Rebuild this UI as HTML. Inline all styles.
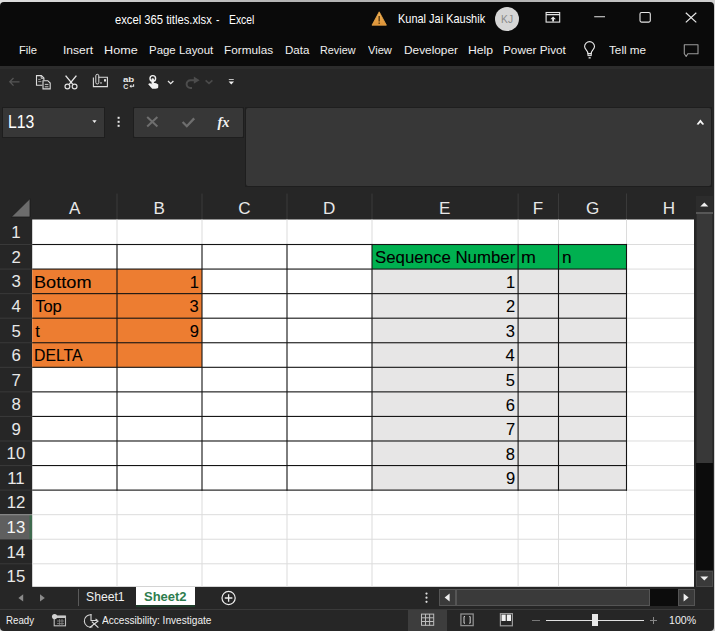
<!DOCTYPE html>
<html><head><meta charset="utf-8"><style>
html,body{margin:0;padding:0;width:715px;height:631px;overflow:hidden;background:linear-gradient(90deg,#dedede 0%,#b4b4b4 40%,#b0b0b0 70%,#d0d0d0 100%);}
#win{position:absolute;left:0;top:1.6px;width:713.5px;height:629.4px;overflow:hidden;border-radius:4px;}
#in{position:absolute;left:0;top:-1.6px;width:715px;height:631px;}
.t{position:absolute;white-space:pre;line-height:1;font-family:"Liberation Sans",sans-serif;transform-origin:0 0;}
</style></head><body>
<div id="win"><div id="in">
<div style="position:absolute;left:0px;top:0px;width:713.5px;height:65.5px;background:#0a0a0a;"></div>
<div style="position:absolute;left:0px;top:65.5px;width:713.5px;height:565.5px;background:#262626;"></div>
<div style="position:absolute;left:0px;top:66px;width:713.5px;height:2.5px;background:#2c2c2c;"></div>
<div style="position:absolute;left:2px;top:107px;width:103px;height:30.5px;background:#1e1e1e;"></div>
<div style="position:absolute;left:133px;top:107px;width:111px;height:30.5px;background:#1e1e1e;"></div>
<div style="position:absolute;left:244.5px;top:107px;width:467px;height:79.5px;background:#1e1e1e;"></div>
<div style="position:absolute;left:3px;top:108px;width:101px;height:28.5px;background:#373737;"></div>
<div style="position:absolute;left:134px;top:108px;width:109px;height:28.5px;background:#373737;border-radius:1px"></div>
<div style="position:absolute;left:245.5px;top:108px;width:465px;height:77.7px;background:#373737;border-radius:2px"></div>
<svg style="position:absolute;left:0;top:0" width="715" height="631"><rect x="116.500" y="193.500" width="1.000" height="26.000" fill="#3a3a3a" /><rect x="201.500" y="193.500" width="1.000" height="26.000" fill="#3a3a3a" /><rect x="286.500" y="193.500" width="1.000" height="26.000" fill="#3a3a3a" /><rect x="371.500" y="193.500" width="1.000" height="26.000" fill="#3a3a3a" /><rect x="517.600" y="193.500" width="1.000" height="26.000" fill="#3a3a3a" /><rect x="558.000" y="193.500" width="1.000" height="26.000" fill="#3a3a3a" /><rect x="626.000" y="193.500" width="1.000" height="26.000" fill="#3a3a3a" /><rect x="0.000" y="244.010" width="32.200" height="1.000" fill="#3a3a3a" /><rect x="0.000" y="268.570" width="32.200" height="1.000" fill="#3a3a3a" /><rect x="0.000" y="293.130" width="32.200" height="1.000" fill="#3a3a3a" /><rect x="0.000" y="317.690" width="32.200" height="1.000" fill="#3a3a3a" /><rect x="0.000" y="342.250" width="32.200" height="1.000" fill="#3a3a3a" /><rect x="0.000" y="366.810" width="32.200" height="1.000" fill="#3a3a3a" /><rect x="0.000" y="391.370" width="32.200" height="1.000" fill="#3a3a3a" /><rect x="0.000" y="415.930" width="32.200" height="1.000" fill="#3a3a3a" /><rect x="0.000" y="440.490" width="32.200" height="1.000" fill="#3a3a3a" /><rect x="0.000" y="465.050" width="32.200" height="1.000" fill="#3a3a3a" /><rect x="0.000" y="489.610" width="32.200" height="1.000" fill="#3a3a3a" /><rect x="0.000" y="514.170" width="32.200" height="1.000" fill="#3a3a3a" /><rect x="0.000" y="538.730" width="32.200" height="1.000" fill="#3a3a3a" /><rect x="0.000" y="563.290" width="32.200" height="1.000" fill="#3a3a3a" /><rect x="0.000" y="514.670" width="32.200" height="24.560" fill="#5f5f5f" /><rect x="29.400" y="514.670" width="2.800" height="24.560" fill="#3f6a4e" /><rect x="0.000" y="514.070" width="32.200" height="1.200" fill="#8a8a8a" /><rect x="32.200" y="219.500" width="662.000" height="367.300" fill="#ffffff" /><rect x="32.200" y="269.070" width="169.800" height="98.240" fill="#ED7D31" /><rect x="372.000" y="244.510" width="254.500" height="24.560" fill="#00B050" /><rect x="372.000" y="269.070" width="254.500" height="221.040" fill="#E7E6E6" /><rect x="116.500" y="219.500" width="1.000" height="25.010" fill="#dcdcdc" /><rect x="116.500" y="490.110" width="1.000" height="96.690" fill="#dcdcdc" /><rect x="201.500" y="219.500" width="1.000" height="25.010" fill="#dcdcdc" /><rect x="201.500" y="490.110" width="1.000" height="96.690" fill="#dcdcdc" /><rect x="286.500" y="219.500" width="1.000" height="25.010" fill="#dcdcdc" /><rect x="286.500" y="490.110" width="1.000" height="96.690" fill="#dcdcdc" /><rect x="371.500" y="219.500" width="1.000" height="25.010" fill="#dcdcdc" /><rect x="371.500" y="490.110" width="1.000" height="96.690" fill="#dcdcdc" /><rect x="517.600" y="219.500" width="1.000" height="25.010" fill="#dcdcdc" /><rect x="517.600" y="490.110" width="1.000" height="96.690" fill="#dcdcdc" /><rect x="558.000" y="219.500" width="1.000" height="25.010" fill="#dcdcdc" /><rect x="558.000" y="490.110" width="1.000" height="96.690" fill="#dcdcdc" /><rect x="626.000" y="219.500" width="1.000" height="25.010" fill="#dcdcdc" /><rect x="626.000" y="490.110" width="1.000" height="96.690" fill="#dcdcdc" /><rect x="626.500" y="244.010" width="68.500" height="1.000" fill="#dcdcdc" /><rect x="626.500" y="268.570" width="68.500" height="1.000" fill="#dcdcdc" /><rect x="626.500" y="293.130" width="68.500" height="1.000" fill="#dcdcdc" /><rect x="626.500" y="317.690" width="68.500" height="1.000" fill="#dcdcdc" /><rect x="626.500" y="342.250" width="68.500" height="1.000" fill="#dcdcdc" /><rect x="626.500" y="366.810" width="68.500" height="1.000" fill="#dcdcdc" /><rect x="626.500" y="391.370" width="68.500" height="1.000" fill="#dcdcdc" /><rect x="626.500" y="415.930" width="68.500" height="1.000" fill="#dcdcdc" /><rect x="626.500" y="440.490" width="68.500" height="1.000" fill="#dcdcdc" /><rect x="626.500" y="465.050" width="68.500" height="1.000" fill="#dcdcdc" /><rect x="626.500" y="489.610" width="68.500" height="1.000" fill="#dcdcdc" /><rect x="32.200" y="514.170" width="662.800" height="1.000" fill="#dcdcdc" /><rect x="32.200" y="538.730" width="662.800" height="1.000" fill="#dcdcdc" /><rect x="32.200" y="563.290" width="662.800" height="1.000" fill="#dcdcdc" /><rect x="32.200" y="243.960" width="594.800" height="1.100" fill="#141414" /><rect x="32.200" y="268.520" width="594.800" height="1.100" fill="#141414" /><rect x="32.200" y="293.080" width="594.800" height="1.100" fill="#141414" /><rect x="32.200" y="317.640" width="594.800" height="1.100" fill="#141414" /><rect x="32.200" y="342.200" width="594.800" height="1.100" fill="#141414" /><rect x="32.200" y="366.760" width="594.800" height="1.100" fill="#141414" /><rect x="32.200" y="391.320" width="594.800" height="1.100" fill="#141414" /><rect x="32.200" y="415.880" width="594.800" height="1.100" fill="#141414" /><rect x="32.200" y="440.440" width="594.800" height="1.100" fill="#141414" /><rect x="32.200" y="465.000" width="594.800" height="1.100" fill="#141414" /><rect x="32.200" y="489.560" width="594.800" height="1.100" fill="#141414" /><rect x="116.450" y="243.960" width="1.100" height="246.700" fill="#141414" /><rect x="201.450" y="243.960" width="1.100" height="246.700" fill="#141414" /><rect x="286.450" y="243.960" width="1.100" height="246.700" fill="#141414" /><rect x="371.450" y="243.960" width="1.100" height="246.700" fill="#141414" /><rect x="517.550" y="243.960" width="1.100" height="246.700" fill="#141414" /><rect x="557.950" y="243.960" width="1.100" height="246.700" fill="#141414" /><rect x="625.950" y="243.960" width="1.100" height="246.700" fill="#141414" /></svg>
<div style="position:absolute;left:694.2px;top:196px;width:19px;height:391px;background:#262626;"></div>
<div style="position:absolute;left:695.5px;top:196px;width:17px;height:15.5px;background:#2c2c2c;"></div>
<div style="position:absolute;left:695.5px;top:212px;width:17px;height:1.6px;background:#575757;"></div>
<div style="position:absolute;left:695.5px;top:213.6px;width:17px;height:249.4px;background:#383838;border-left:1px solid #2c2c2c;border-right:1px solid #2c2c2c;box-sizing:border-box"></div>
<div style="position:absolute;left:695.5px;top:463px;width:17px;height:107px;background:#0c0c0c;"></div>
<div style="position:absolute;left:695.5px;top:570.5px;width:17px;height:16.5px;background:#3a3a3a;border:1px solid #4a4a4a;box-sizing:border-box"></div>
<div style="position:absolute;left:66px;top:65.5px;width:0px;height:0px;background:#000;"></div>
<div style="position:absolute;left:0px;top:586.8px;width:713.5px;height:22.2px;background:#262626;"></div>
<div style="position:absolute;left:0px;top:608.7px;width:713.5px;height:1px;background:#3a3a3a;"></div>
<div style="position:absolute;left:77.5px;top:589px;width:1px;height:16.5px;background:#5a5a5a;"></div>
<div style="position:absolute;left:136px;top:586.8px;width:58.5px;height:19px;background:#ffffff;"></div>
<div style="position:absolute;left:136px;top:605px;width:59px;height:2px;background:#1d3d2a;"></div>
<div style="position:absolute;left:438.7px;top:589.2px;width:255.8px;height:16.6px;background:#262626;"></div>
<div style="position:absolute;left:438.7px;top:589.2px;width:17.2px;height:16.6px;background:#3a3a3a;border:1px solid #555;box-sizing:border-box"></div>
<div style="position:absolute;left:455.9px;top:589.2px;width:194.5px;height:16.6px;background:#3a3a3a;border:1px solid #555;box-sizing:border-box"></div>
<div style="position:absolute;left:650.4px;top:589.2px;width:27.200000000000045px;height:16.6px;background:#0c0c0c;"></div>
<div style="position:absolute;left:677.6px;top:589.2px;width:17px;height:16.6px;background:#3a3a3a;border:1px solid #555;box-sizing:border-box"></div>
<div style="position:absolute;left:408px;top:609.7px;width:39.3px;height:21.3px;background:#3d3d3d;"></div>
<div style="position:absolute;left:546px;top:619.8px;width:98px;height:1.3px;background:#e0e0e0;"></div>
<div style="position:absolute;left:532px;top:619.9px;width:7.6px;height:1.2px;background:#777;"></div>
<div style="position:absolute;left:649.5px;top:619.9px;width:7px;height:1.2px;background:#888;"></div>
<div style="position:absolute;left:652.5px;top:616.9px;width:1.2px;height:7px;background:#888;"></div>
<div style="position:absolute;left:592.3px;top:614px;width:5.4px;height:11.8px;background:#e8e8e8;"></div>
<div style="position:absolute;left:494.8px;top:6.6px;width:24.6px;height:24.6px;border-radius:50%;background:#d6d6d6"></div>
<div class="t" style="left:114.55px;top:14.09px;font-size:12.66px;color:#ffffff;font-weight:400;transform:scaleX(0.8881);">excel 365 titles.xlsx</div>
<div class="t" style="left:215.98px;top:14.09px;font-size:12.66px;color:#ffffff;font-weight:400;transform:scaleX(0.8215);">-</div>
<div class="t" style="left:229.07px;top:14.09px;font-size:12.66px;color:#ffffff;font-weight:400;transform:scaleX(0.8197);">Excel</div>
<div class="t" style="left:398.12px;top:13.47px;font-size:12.80px;color:#ffffff;font-weight:400;transform:scaleX(0.8565);">Kunal Jai Kaushik</div>
<div class="t" style="left:18.60px;top:44.87px;font-size:11.38px;color:#f0f0f0;font-weight:400;transform:scaleX(0.9874);">File</div>
<div class="t" style="left:63.41px;top:44.87px;font-size:11.38px;color:#f0f0f0;font-weight:400;transform:scaleX(1.0597);">Insert</div>
<div class="t" style="left:104.49px;top:44.87px;font-size:11.38px;color:#f0f0f0;font-weight:400;transform:scaleX(1.1125);">Home</div>
<div class="t" style="left:149.48px;top:44.87px;font-size:11.38px;color:#f0f0f0;font-weight:400;transform:scaleX(1.0060);">Page Layout</div>
<div class="t" style="left:224.46px;top:44.87px;font-size:11.38px;color:#f0f0f0;font-weight:400;transform:scaleX(1.0352);">Formulas</div>
<div class="t" style="left:284.58px;top:44.87px;font-size:11.38px;color:#f0f0f0;font-weight:400;transform:scaleX(1.0142);">Data</div>
<div class="t" style="left:319.93px;top:44.87px;font-size:11.38px;color:#f0f0f0;font-weight:400;transform:scaleX(0.9509);">Review</div>
<div class="t" style="left:368.00px;top:44.87px;font-size:11.38px;color:#f0f0f0;font-weight:400;transform:scaleX(0.9776);">View</div>
<div class="t" style="left:403.65px;top:44.87px;font-size:11.38px;color:#f0f0f0;font-weight:400;transform:scaleX(1.0411);">Developer</div>
<div class="t" style="left:467.82px;top:44.87px;font-size:11.38px;color:#f0f0f0;font-weight:400;transform:scaleX(1.0733);">Help</div>
<div class="t" style="left:503.06px;top:44.87px;font-size:11.38px;color:#f0f0f0;font-weight:400;transform:scaleX(1.0363);">Power Pivot</div>
<div class="t" style="left:609.27px;top:44.87px;font-size:11.38px;color:#f0f0f0;font-weight:400;transform:scaleX(1.0309);">Tell me</div>
<div class="t" style="left:7.74px;top:113.84px;font-size:17.92px;color:#ffffff;font-weight:400;transform:scaleX(0.8806);">L13</div>
<div class="t" style="left:68.88px;top:199.56px;font-size:17.07px;color:#e8e8e8;font-weight:400;transform:scaleX(1.0000);">A</div>
<div class="t" style="left:153.53px;top:199.56px;font-size:17.07px;color:#e8e8e8;font-weight:400;transform:scaleX(1.0000);">B</div>
<div class="t" style="left:238.18px;top:199.56px;font-size:17.07px;color:#e8e8e8;font-weight:400;transform:scaleX(1.0000);">C</div>
<div class="t" style="left:323.01px;top:199.56px;font-size:17.07px;color:#e8e8e8;font-weight:400;transform:scaleX(1.0000);">D</div>
<div class="t" style="left:438.99px;top:199.56px;font-size:17.07px;color:#e8e8e8;font-weight:400;transform:scaleX(1.0000);">E</div>
<div class="t" style="left:532.67px;top:199.56px;font-size:17.07px;color:#e8e8e8;font-weight:400;transform:scaleX(1.0000);">F</div>
<div class="t" style="left:586.01px;top:199.56px;font-size:17.07px;color:#e8e8e8;font-weight:400;transform:scaleX(1.0000);">G</div>
<div class="t" style="left:662.77px;top:199.56px;font-size:17.07px;color:#e8e8e8;font-weight:400;transform:scaleX(1.0000);">H</div>
<div class="t" style="left:11.33px;top:225.30px;font-size:16.79px;color:#e8e8e8;font-weight:400;transform:scaleX(1.0000);">1</div>
<div class="t" style="left:11.50px;top:249.86px;font-size:16.79px;color:#e8e8e8;font-weight:400;transform:scaleX(1.0000);">2</div>
<div class="t" style="left:11.58px;top:274.42px;font-size:16.79px;color:#e8e8e8;font-weight:400;transform:scaleX(1.0000);">3</div>
<div class="t" style="left:11.58px;top:298.98px;font-size:16.79px;color:#e8e8e8;font-weight:400;transform:scaleX(1.0000);">4</div>
<div class="t" style="left:11.50px;top:323.54px;font-size:16.79px;color:#e8e8e8;font-weight:400;transform:scaleX(1.0000);">5</div>
<div class="t" style="left:11.42px;top:348.10px;font-size:16.79px;color:#e8e8e8;font-weight:400;transform:scaleX(1.0000);">6</div>
<div class="t" style="left:11.50px;top:372.66px;font-size:16.79px;color:#e8e8e8;font-weight:400;transform:scaleX(1.0000);">7</div>
<div class="t" style="left:11.50px;top:397.22px;font-size:16.79px;color:#e8e8e8;font-weight:400;transform:scaleX(1.0000);">8</div>
<div class="t" style="left:11.58px;top:421.78px;font-size:16.79px;color:#e8e8e8;font-weight:400;transform:scaleX(1.0000);">9</div>
<div class="t" style="left:6.58px;top:446.34px;font-size:16.79px;color:#e8e8e8;font-weight:400;transform:scaleX(1.0000);">10</div>
<div class="t" style="left:7.29px;top:470.90px;font-size:16.79px;color:#e8e8e8;font-weight:400;transform:scaleX(1.0000);">11</div>
<div class="t" style="left:6.66px;top:495.46px;font-size:16.79px;color:#e8e8e8;font-weight:400;transform:scaleX(1.0000);">12</div>
<div class="t" style="left:6.58px;top:520.02px;font-size:16.79px;color:#f4f4f4;font-weight:400;transform:scaleX(1.0000);">13</div>
<div class="t" style="left:6.50px;top:544.58px;font-size:16.79px;color:#e8e8e8;font-weight:400;transform:scaleX(1.0000);">14</div>
<div class="t" style="left:6.58px;top:569.14px;font-size:16.79px;color:#e8e8e8;font-weight:400;transform:scaleX(1.0000);">15</div>
<div class="t" style="left:34.05px;top:273.76px;font-size:16.50px;color:#000000;-webkit-text-stroke:0.08px #000;font-weight:400;transform:scaleX(1.0999);">Bottom</div>
<div class="t" style="left:35.17px;top:298.32px;font-size:16.50px;color:#000000;-webkit-text-stroke:0.08px #000;font-weight:400;transform:scaleX(1.0000);">Top</div>
<div class="t" style="left:35.33px;top:322.88px;font-size:16.50px;color:#000000;-webkit-text-stroke:0.08px #000;font-weight:400;transform:scaleX(1.0000);">t</div>
<div class="t" style="left:34.24px;top:347.44px;font-size:16.50px;color:#000000;-webkit-text-stroke:0.08px #000;font-weight:400;transform:scaleX(0.9583);">DELTA</div>
<div class="t" style="left:189.78px;top:273.76px;font-size:16.50px;color:#000000;-webkit-text-stroke:0.08px #000;font-weight:400;transform:scaleX(1.0000);">1</div>
<div class="t" style="left:189.62px;top:298.32px;font-size:16.50px;color:#000000;-webkit-text-stroke:0.08px #000;font-weight:400;transform:scaleX(1.0000);">3</div>
<div class="t" style="left:189.78px;top:322.88px;font-size:16.50px;color:#000000;-webkit-text-stroke:0.08px #000;font-weight:400;transform:scaleX(1.0000);">9</div>
<div class="t" style="left:374.93px;top:249.20px;font-size:16.50px;color:#000000;-webkit-text-stroke:0.08px #000;font-weight:400;transform:scaleX(1.0196);">Sequence Number</div>
<div class="t" style="left:521.13px;top:249.20px;font-size:16.50px;color:#000000;-webkit-text-stroke:0.08px #000;font-weight:400;transform:scaleX(1.0840);">m</div>
<div class="t" style="left:561.76px;top:249.20px;font-size:16.50px;color:#000000;-webkit-text-stroke:0.08px #000;font-weight:400;transform:scaleX(1.0468);">n</div>
<div class="t" style="left:505.88px;top:273.76px;font-size:16.50px;color:#000000;-webkit-text-stroke:0.08px #000;font-weight:400;transform:scaleX(1.0000);">1</div>
<div class="t" style="left:505.88px;top:298.32px;font-size:16.50px;color:#000000;-webkit-text-stroke:0.08px #000;font-weight:400;transform:scaleX(1.0000);">2</div>
<div class="t" style="left:505.72px;top:322.88px;font-size:16.50px;color:#000000;-webkit-text-stroke:0.08px #000;font-weight:400;transform:scaleX(1.0000);">3</div>
<div class="t" style="left:505.55px;top:347.44px;font-size:16.50px;color:#000000;-webkit-text-stroke:0.08px #000;font-weight:400;transform:scaleX(1.0000);">4</div>
<div class="t" style="left:505.72px;top:372.00px;font-size:16.50px;color:#000000;-webkit-text-stroke:0.08px #000;font-weight:400;transform:scaleX(1.0000);">5</div>
<div class="t" style="left:505.72px;top:396.56px;font-size:16.50px;color:#000000;-webkit-text-stroke:0.08px #000;font-weight:400;transform:scaleX(1.0000);">6</div>
<div class="t" style="left:505.88px;top:421.12px;font-size:16.50px;color:#000000;-webkit-text-stroke:0.08px #000;font-weight:400;transform:scaleX(1.0000);">7</div>
<div class="t" style="left:505.72px;top:445.68px;font-size:16.50px;color:#000000;-webkit-text-stroke:0.08px #000;font-weight:400;transform:scaleX(1.0000);">8</div>
<div class="t" style="left:505.88px;top:470.24px;font-size:16.50px;color:#000000;-webkit-text-stroke:0.08px #000;font-weight:400;transform:scaleX(1.0000);">9</div>
<div class="t" style="left:86.41px;top:590.07px;font-size:13.51px;color:#f0f0f0;font-weight:400;transform:scaleX(0.9024);">Sheet1</div>
<div class="t" style="left:144.24px;top:589.89px;font-size:13.37px;color:#2e7d4e;font-weight:700;transform:scaleX(0.9722);">Sheet2</div>
<div class="t" style="left:6.12px;top:615.72px;font-size:10.38px;color:#f0f0f0;font-weight:400;transform:scaleX(0.9354);">Ready</div>
<div class="t" style="left:101.80px;top:615.72px;font-size:10.38px;color:#f0f0f0;font-weight:400;transform:scaleX(0.9736);">Accessibility: Investigate</div>
<div class="t" style="left:668.66px;top:615.29px;font-size:10.53px;color:#f0f0f0;font-weight:400;transform:scaleX(1.0047);">100%</div>
<div class="t" style="left:501.07px;top:14.54px;font-size:10.24px;color:#8a8a8a;font-weight:400;transform:scaleX(1.0000);">KJ</div>
<svg style="position:absolute;left:0;top:0" width="715" height="631" viewBox="0 0 715 631">
<!-- warning -->
<defs><linearGradient id="wg" x1="0" y1="0" x2="0" y2="1"><stop offset="0" stop-color="#F2B45A"/><stop offset="1" stop-color="#DC9236"/></linearGradient></defs><path d="M379.2 11.8 L386.4 25.2 L372 25.2 Z" fill="url(#wg)" stroke="#E8A445" stroke-width="0.8" stroke-linejoin="round"/>
<rect x="378.5" y="16" width="1.4" height="5.5" fill="#5a3a10"/>
<rect x="378.5" y="22.5" width="1.4" height="1.4" fill="#5a3a10"/>
<!-- ribbon display options -->
<rect x="546.1" y="12.5" width="13.6" height="9.6" fill="none" stroke="#e6e6e6" stroke-width="1.1"/>
<line x1="546" y1="14.6" x2="560" y2="14.6" stroke="#e6e6e6" stroke-width="1.1"/>
<path d="M553.1 16.4 L555.9 19.2 L554 19.2 L554 21.6 L552.2 21.6 L552.2 19.2 L550.3 19.2 Z" fill="#e6e6e6"/>
<!-- minimize -->
<line x1="594.2" y1="16.8" x2="605" y2="16.8" stroke="#e6e6e6" stroke-width="1.1"/>
<!-- maximize -->
<rect x="640" y="12.5" width="10.3" height="9.6" rx="1.5" fill="none" stroke="#e6e6e6" stroke-width="1.1"/>
<!-- close -->
<path d="M685.8 12.8 L696.3 22.4 M696.3 12.8 L685.8 22.4" stroke="#e6e6e6" stroke-width="1.2"/>
<!-- bulb -->
<path d="M587.9 53.6 C587.9 50.5 584.6 49.5 584.6 46.6 A4.95 4.95 0 0 1 594.5 46.6 C594.5 49.5 591.2 50.5 591.2 53.6 Z" fill="none" stroke="#e8e8e8" stroke-width="1.1"/>
<rect x="588" y="53.6" width="3.2" height="2" fill="none" stroke="#e8e8e8" stroke-width="1"/>
<rect x="588.6" y="57.2" width="2.1" height="1.3" fill="#e8e8e8"/>
<!-- comment -->
<path d="M684.3 44.8 L698 44.8 L698 53.8 L687.8 53.8 L686.2 56.5 L684.3 53.8 Z" fill="none" stroke="#9a9a9a" stroke-width="1.1" stroke-linejoin="round"/>
<!-- back arrow dim -->
<path d="M10 81.8 L19.5 81.8 M13.5 78 L9.8 81.8 L13.5 85.6" fill="none" stroke="#555" stroke-width="1.3"/>
<!-- copy -->
<path d="M42.4 85.2 L36.5 85.2 L36.5 75.6 L41.4 75.6 L43.9 78.1 L43.9 80.2" fill="none" stroke="#dcdcdc" stroke-width="1.1"/>
<path d="M41.2 75.8 L41.2 78.3 L43.7 78.3" fill="none" stroke="#dcdcdc" stroke-width="0.9"/>
<path d="M38.2 79.4 L40.6 79.4 M38.2 81.6 L41.4 81.6" stroke="#bdbdbd" stroke-width="0.8"/>
<path d="M43 80.7 L47.8 80.7 L50.2 83.1 L50.2 88.9 L43 88.9 Z" fill="#262626" stroke="#dcdcdc" stroke-width="1.1"/>
<path d="M44.8 84.4 L48.4 84.4 M44.8 86.8 L48.4 86.8" stroke="#d8d8d8" stroke-width="0.9"/>
<!-- scissors -->
<path d="M65.6 75.6 L72.8 84.4 M76.4 75.6 L69.2 84.4" stroke="#e6e6e6" stroke-width="1.4"/>
<circle cx="67.4" cy="86.5" r="2.4" fill="none" stroke="#e0e0e0" stroke-width="1.2"/>
<circle cx="74.6" cy="86.5" r="2.4" fill="none" stroke="#e0e0e0" stroke-width="1.2"/>
<!-- paste/clip box -->
<path d="M93.4 77.5 L93.4 86.6 L107.4 86.6 L107.4 77.2 L98.5 77.2" fill="none" stroke="#dcdcdc" stroke-width="1.1"/>
<path d="M95.8 82.5 L95.8 75.8 A1.5 1.5 0 0 1 98.8 75.8 L98.8 82.5 A1.5 1.5 0 0 1 95.8 82.5" fill="none" stroke="#dcdcdc" stroke-width="1"/>
<rect x="104" y="79.2" width="2" height="2.3" fill="#e6e6e6"/>
<rect x="100.2" y="82.3" width="1.6" height="1.3" fill="#cfcfcf"/>
<!-- ab c -->
<text x="122.9" y="81.9" font-family="Liberation Sans" font-weight="700" font-size="7.3" fill="#e8e8e8" textLength="11.3" lengthAdjust="spacingAndGlyphs">ab</text>
<text x="123.2" y="88.9" font-family="Liberation Sans" font-weight="700" font-size="7.4" fill="#e8e8e8" textLength="5" lengthAdjust="spacingAndGlyphs">C</text>
<path d="M133.6 84.2 L133.6 86.3 L130.6 86.3" fill="none" stroke="#e4e4e4" stroke-width="1.1"/>
<path d="M129.4 86.3 L131.4 84.6 L131.4 88 Z" fill="#e4e4e4"/>
<!-- touch hand -->
<circle cx="152.8" cy="78.4" r="2.8" fill="none" stroke="#f2f2f2" stroke-width="1.4"/>
<rect x="151.5" y="78.2" width="2.4" height="6.5" rx="1" fill="#f2f2f2"/>
<path d="M148.2 84.2 C149 83.2 150.4 83 151.5 84 L152.5 84.6 L153.2 82.8 L156.2 83.2 L158.3 84.6 L158.2 87.6 C157.6 88.8 156 88.8 154 88.8 L152.2 88.8 Z" fill="#f2f2f2"/>
<!-- chevron -->
<path d="M168 81 L170.7 83.6 L173.4 81" fill="none" stroke="#e6e6e6" stroke-width="1.3"/>
<!-- redo dim -->
<path d="M196.5 80.2 L190.5 80.2 A3.9 3.9 0 0 0 190.5 88 L192 88" fill="none" stroke="#4c4c4c" stroke-width="2"/>
<path d="M193.8 76.6 L199.6 80.2 L193.8 83.8 Z" fill="#4c4c4c"/>
<path d="M205.6 80.4 L209 83.4 L212.4 80.4" fill="none" stroke="#4a4a4a" stroke-width="1.7"/>
<!-- customize -->
<line x1="228.8" y1="79.5" x2="233.8" y2="79.5" stroke="#d0d0d0" stroke-width="0.9"/>
<path d="M228.6 81.4 L234 81.4 L231.3 84.6 Z" fill="#f0f0f0"/>
<!-- name box dropdown -->
<path d="M92.3 120.3 L96.6 120.3 L94.45 122.9 Z" fill="#f0f0f0"/>
<!-- vertical dots -->
<rect x="117.6" y="116.8" width="2" height="2" fill="#e8e8e8"/>
<rect x="117.6" y="120.8" width="2" height="2" fill="#e8e8e8"/>
<rect x="117.6" y="124.8" width="2" height="2" fill="#e8e8e8"/>
<!-- formula X -->
<path d="M147.2 117 L157.4 126.6 M157.4 117 L147.2 126.6" stroke="#6e6e6e" stroke-width="2"/>
<!-- check -->
<path d="M182.6 122 L186.8 126.2 L194.2 118.4" fill="none" stroke="#6e6e6e" stroke-width="2.3"/>
<!-- fx -->
<text x="217.5" y="127.3" font-family="Liberation Serif" font-style="italic" font-weight="700" font-size="14.5" fill="#f2f2f2" textLength="12" lengthAdjust="spacingAndGlyphs">fx</text>
<!-- collapse chevron -->
<path d="M696.6 124.2 L700.4 119.4 L704.2 124.2 L702.4 124.8 L700.4 122.4 L698.4 124.8 Z" fill="#f6f6f6"/>
<!-- select all triangle -->
<path d="M30 198.6 L30 217 L11.3 217 Z" fill="#6c6c6c" stroke="#1a1a1a" stroke-width="0.8"/>
<!-- vscroll arrows -->
<path d="M700.3 206.5 L704.3 202.5 L708.3 206.5 Z" fill="#f0f0f0"/>
<path d="M700.3 576.6 L708.3 576.6 L704.3 580.6 Z" fill="#f0f0f0"/>
<!-- tab nav arrows -->
<path d="M23.2 594.2 L23.2 601.6 L18.4 597.9 Z" fill="#8a8a8a"/>
<path d="M40 594.2 L40 601.6 L44.8 597.9 Z" fill="#8a8a8a"/>
<!-- plus circle -->
<circle cx="228.6" cy="598" r="6.6" fill="none" stroke="#ececec" stroke-width="1.2"/>
<path d="M224.8 598 L232.4 598 M228.6 594.2 L228.6 601.8" stroke="#ececec" stroke-width="1.3"/>
<!-- tab dots -->
<circle cx="426.5" cy="593.6" r="1.1" fill="#e0e0e0"/>
<circle cx="426.5" cy="597.7" r="1.1" fill="#e0e0e0"/>
<circle cx="426.5" cy="601.8" r="1.1" fill="#e0e0e0"/>
<!-- hscroll arrows -->
<path d="M449.6 593.6 L449.6 601.6 L444.6 597.6 Z" fill="#f0f0f0"/>
<path d="M683.6 593.6 L683.6 601.6 L688.6 597.6 Z" fill="#f0f0f0"/>
<!-- macro icon -->
<rect x="54.2" y="616.2" width="11.3" height="9.6" fill="none" stroke="#bdbdbd" stroke-width="1.1"/>
<rect x="56" y="615.6" width="9.6" height="2.4" fill="#c8c8c8"/>
<path d="M57 621 L64 621 M57 623.6 L64 623.6 M59.6 619 L59.6 625.5 M62 619 L62 625.5" stroke="#8a8a8a" stroke-width="0.8"/>
<circle cx="54.6" cy="616.6" r="2.6" fill="#d0d0d0"/>
<!-- accessibility -->
<path d="M91.5 614.8 A6.2 6.2 0 1 0 92.5 626.8" fill="none" stroke="#d8d8d8" stroke-width="1.1"/>
<path d="M91 614.2 L91 620.5 L97.5 620.5 M95.5 618.8 L97.5 620.5" fill="none" stroke="#d8d8d8" stroke-width="1.1"/>
<path d="M89.6 627.6 L98.4 620.8 M91.8 621.6 L98.4 627.6" stroke="#e0e0e0" stroke-width="1.2"/>
<!-- normal view grid -->
<rect x="421.5" y="614.1" width="12.2" height="11.2" fill="none" stroke="#bdbdbd" stroke-width="1"/>
<path d="M425.5 614 L425.5 625.5 M429.6 614 L429.6 625.5 M421.5 617.8 L433.7 617.8 M421.5 621.5 L433.7 621.5" stroke="#bdbdbd" stroke-width="1"/>
<!-- page layout -->
<rect x="460.9" y="614" width="12.3" height="11.6" fill="none" stroke="#8e8e8e" stroke-width="1.3"/>
<path d="M464 616.6 L464 623.2 M470.2 616.6 L470.2 623.2 M464 616.6 L465 616.6 M464 623.2 L465 623.2 M470.2 616.6 L469.2 616.6 M470.2 623.2 L469.2 623.2" fill="none" stroke="#d0d0d0" stroke-width="1"/>
<!-- page break -->
<rect x="500.4" y="613.6" width="12" height="12.2" fill="none" stroke="#9a9a9a" stroke-width="1.2"/>
<rect x="501.5" y="614.6" width="4.2" height="6.4" fill="#f0f0f0"/>
<rect x="506.8" y="614.6" width="4.2" height="6.4" fill="#f0f0f0"/>
</svg>

</div></div>
</body></html>
